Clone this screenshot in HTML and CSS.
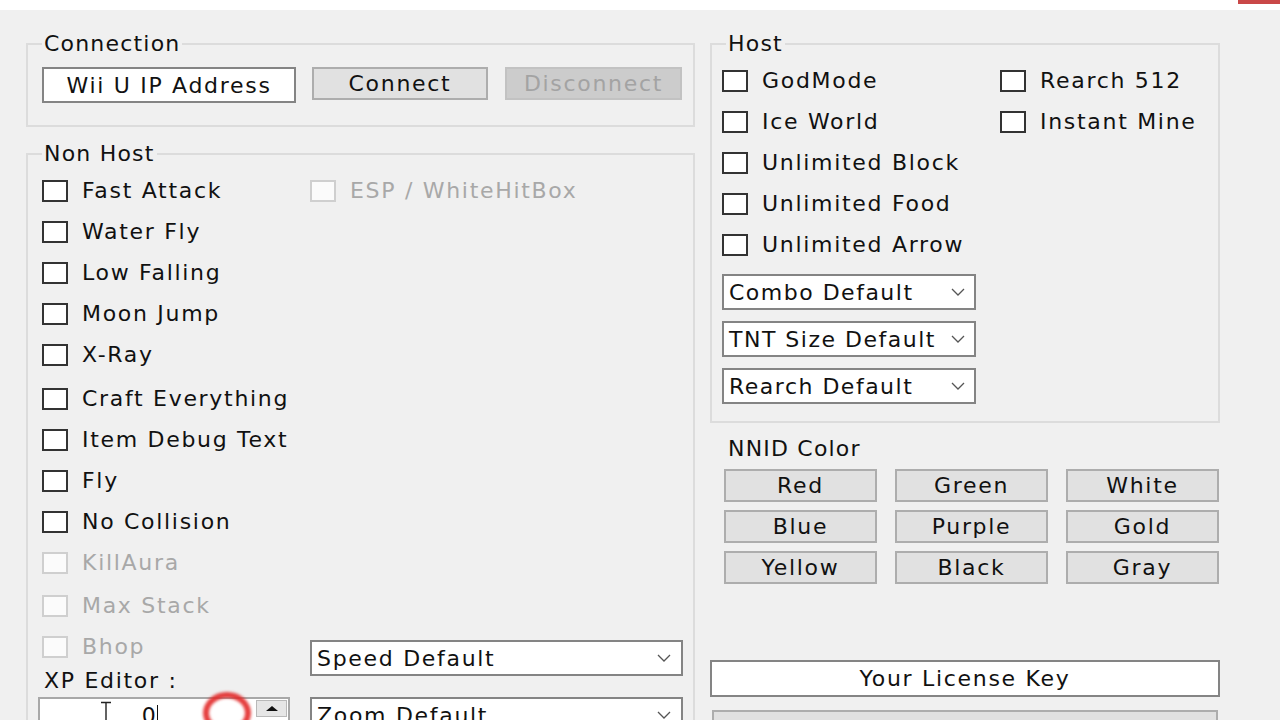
FILE: index.html
```html
<!DOCTYPE html>
<html lang="en">
<head>
<meta charset="utf-8">
<title>Minecraft Wii U Mod Menu</title>
<link rel="stylesheet" href="styles.css">
</head>
<body>
<div class="titlebar"><span class="close"></span></div>
<main class="window">
  <div class="col-left">
    <fieldset class="group group-conn">
      <legend>Connection</legend>
      <div class="conn-row">
        <div class="textbox tb-ip">Wii U IP Address</div>
        <button class="btn btn-connect">Connect</button>
        <button class="btn btn-disabled">Disconnect</button>
      </div>
    </fieldset>

    <fieldset class="group group-nonhost">
      <legend>Non Host</legend>
      <div class="nh-grid">
        <div class="nh-col1">
          <label class="check"><span class="box"></span>Fast Attack</label>
          <label class="check"><span class="box"></span>Water Fly</label>
          <label class="check"><span class="box"></span>Low Falling</label>
          <label class="check"><span class="box"></span>Moon Jump</label>
          <label class="check"><span class="box"></span>X-Ray</label>
          <label class="check gap3"><span class="box"></span>Craft Everything</label>
          <label class="check"><span class="box"></span>Item Debug Text</label>
          <label class="check"><span class="box"></span>Fly</label>
          <label class="check"><span class="box"></span>No Collision</label>
          <label class="check disabled"><span class="box"></span>KillAura</label>
          <label class="check disabled gap2"><span class="box"></span>Max Stack</label>
          <label class="check disabled"><span class="box"></span>Bhop</label>
          <div class="xp-label">XP Editor :</div>
          <div class="spinner">
            <svg class="ibeam" width="14" height="22" viewBox="0 0 14 22"><path d="M2 1.5h10M7 1.5v19M2 20.5h10" stroke="#222" stroke-width="1.4" fill="none"/></svg>
            <span class="spin-value">0<span class="caret"></span></span>
            <span class="spin-btns"><span class="spin-up"></span></span>
            <span class="click-ring"></span>
          </div>
        </div>
        <div class="nh-col2">
          <label class="check disabled"><span class="box"></span>ESP / WhiteHitBox</label>
          <div class="combo combo-speed"><span>Speed Default</span><svg class="chev" width="14" height="8" viewBox="0 0 14 8"><polyline points="1,1 7,7 13,1" fill="none" stroke="#555" stroke-width="1.3"/></svg></div>
          <div class="combo combo-zoom"><span>Zoom Default</span><svg class="chev" width="14" height="8" viewBox="0 0 14 8"><polyline points="1,1 7,7 13,1" fill="none" stroke="#555" stroke-width="1.3"/></svg></div>
        </div>
      </div>
    </fieldset>
  </div>

  <div class="col-right">
    <fieldset class="group group-host">
      <legend>Host</legend>
      <div class="host-grid">
        <label class="check"><span class="box"></span>GodMode</label>
        <label class="check"><span class="box"></span>Rearch 512</label>
        <label class="check"><span class="box"></span>Ice World</label>
        <label class="check"><span class="box"></span>Instant Mine</label>
        <label class="check"><span class="box"></span>Unlimited Block</label>
        <span></span>
        <label class="check"><span class="box"></span>Unlimited Food</label>
        <span></span>
        <label class="check"><span class="box"></span>Unlimited Arrow</label>
        <span></span>
      </div>
      <div class="host-combos">
        <div class="combo combo-host"><span>Combo Default</span><svg class="chev" width="14" height="8" viewBox="0 0 14 8"><polyline points="1,1 7,7 13,1" fill="none" stroke="#555" stroke-width="1.3"/></svg></div>
        <div class="combo combo-host"><span>TNT Size Default</span><svg class="chev" width="14" height="8" viewBox="0 0 14 8"><polyline points="1,1 7,7 13,1" fill="none" stroke="#555" stroke-width="1.3"/></svg></div>
        <div class="combo combo-host"><span>Rearch Default</span><svg class="chev" width="14" height="8" viewBox="0 0 14 8"><polyline points="1,1 7,7 13,1" fill="none" stroke="#555" stroke-width="1.3"/></svg></div>
      </div>
    </fieldset>

    <div class="nnid-label">NNID Color</div>
    <div class="color-grid">
      <button class="btn">Red</button>
      <button class="btn">Green</button>
      <button class="btn">White</button>
      <button class="btn">Blue</button>
      <button class="btn">Purple</button>
      <button class="btn">Gold</button>
      <button class="btn">Yellow</button>
      <button class="btn">Black</button>
      <button class="btn">Gray</button>
    </div>

    <div class="textbox tb-license">Your License Key</div>
    <button class="btn btn-login">Login</button>
  </div>
</main>
</body>
</html>
```

FILE: styles.css
```css
* { box-sizing: border-box; }

html, body {
  margin: 0;
  padding: 0;
  width: 1280px;
  height: 720px;
  overflow: hidden;
  background: #f0f0f0;
}

body {
  font-family: "DejaVu Sans", Verdana, sans-serif;
  font-size: 22px;
  letter-spacing: 1.7px;
  color: #111;
}

.titlebar {
  height: 10px;
  background: #ffffff;
  display: flex;
  justify-content: flex-end;
}

.close {
  width: 42px;
  height: 4px;
  background: #c94848;
}

.window {
  display: flex;
  gap: 15px;
  padding: 22px 0 0 26px;
}

.col-left {
  width: 669px;
  display: flex;
  flex-direction: column;
}

.col-right {
  width: 510px;
  display: flex;
  flex-direction: column;
}

/* group boxes */
.group {
  margin: 0;
  padding: 0;
  min-width: 0;
  border: 2px solid #dcdcdc;
}

.group legend {
  margin-left: 0;
  padding: 0 2px;
  line-height: 24px;
  color: #111;
  letter-spacing: 1.2px;
}

.group-host legend {
  margin-left: 4px;
}

.group-conn {
  padding: 11px 8px 22px 14px;
}

.group-nonhost {
  margin-top: 15px;
  padding: 4px 8px 0 14px;
  height: 620px;
}

.group-host {
  padding: 4px 8px 17px 10px;
}

/* connection */
.conn-row {
  display: flex;
  align-items: flex-start;
}

.conn-row > * { flex: none; }

.textbox {
  background: #ffffff;
  border: 2px solid #848484;
  display: flex;
  align-items: center;
  justify-content: center;
  color: #111;
}

.tb-ip {
  width: 254px;
  height: 36px;
}

.btn {
  font: inherit;
  letter-spacing: inherit;
  color: #111;
  background: #e1e1e1;
  border: 2px solid #adadad;
  padding: 0;
  margin: 0;
  display: flex;
  align-items: center;
  justify-content: center;
}

.btn-connect {
  margin-left: 16px;
  width: 176px;
  height: 33px;
}

.btn-disabled {
  margin-left: 17px;
  width: 177px;
  height: 33px;
  background: #cccccc;
  border-color: #c2c2c2;
  color: #a3a3a3;
}

/* checkboxes */
.check {
  display: flex;
  align-items: center;
  height: 41px;
  white-space: nowrap;
  color: #111;
}

.check .box {
  width: 26px;
  height: 22px;
  border: 2px solid #333333;
  background: #ffffff;
  margin-right: 14px;
  flex: none;
}

.check.disabled {
  color: #a8a8a8;
}

.check.disabled .box {
  border-color: #cfcfcf;
  background: #fbfbfb;
}

.gap3 { margin-top: 3px; }
.gap2 { margin-top: 2px; }

/* non host */
.nh-grid {
  display: grid;
  grid-template-columns: 268px 373px;
}

.nh-col1, .nh-col2 {
  display: flex;
  flex-direction: column;
}

.xp-label {
  margin: 2px 0 0 2px;
  line-height: 24px;
}

.spinner {
  position: relative;
  margin: 4px 0 0 -4px;
  width: 252px;
  height: 36px;
  background: #ffffff;
  border: 2px solid #a8a8a8;
  display: flex;
  align-items: center;
}

.ibeam {
  position: absolute;
  left: 59px;
  top: 2px;
}

.spin-value {
  flex: 1;
  padding-left: 4px;
  display: flex;
  justify-content: center;
  align-items: center;
}

.caret {
  display: inline-block;
  width: 1px;
  height: 20px;
  background: #111;
}

.spin-btns {
  align-self: flex-start;
  width: 31px;
  height: 17px;
  margin: 1px 1px 0 0;
  background: #e6e6e6;
  border: 1px solid #b9b9b9;
  display: flex;
  align-items: center;
  justify-content: center;
}

.spin-up {
  width: 0;
  height: 0;
  border-left: 6px solid transparent;
  border-right: 6px solid transparent;
  border-bottom: 5px solid #111;
}

.click-ring {
  position: absolute;
  left: 163px;
  top: -7px;
  width: 48px;
  height: 42px;
  border-radius: 50%;
  border: 6px solid rgba(226, 40, 40, 0.9);
  filter: blur(1.5px);
}

/* combos */
.combo {
  height: 36px;
  background: #ffffff;
  border: 2px solid #848484;
  display: flex;
  align-items: center;
  justify-content: space-between;
  padding: 0 10px 0 5px;
  white-space: nowrap;
  color: #111;
}

.chev { flex: none; }

.combo-speed {
  margin-top: 429px;
  width: 373px;
}

.combo-zoom {
  margin-top: 21px;
  width: 373px;
}

/* host */
.host-grid {
  display: grid;
  grid-template-columns: 278px 1fr;
}

.host-combos {
  margin-top: 9px;
  display: flex;
  flex-direction: column;
  gap: 11px;
}

.combo-host {
  width: 254px;
  padding-right: 9px;
  letter-spacing: 1.5px;
}

/* nnid */
.nnid-label {
  margin: 14px 0 0 18px;
  line-height: 24px;
  letter-spacing: 1.2px;
}

.color-grid {
  margin: 8px 0 0 14px;
  display: grid;
  grid-template-columns: repeat(3, 153px);
  grid-auto-rows: 33px;
  column-gap: 18px;
  row-gap: 8px;
}

.tb-license {
  margin-top: 76px;
  width: 510px;
  height: 37px;
}

.btn-login {
  margin: 13px 0 0 2px;
  width: 506px;
  height: 36px;
  align-items: flex-start;
  padding-top: 4px;
}
```
